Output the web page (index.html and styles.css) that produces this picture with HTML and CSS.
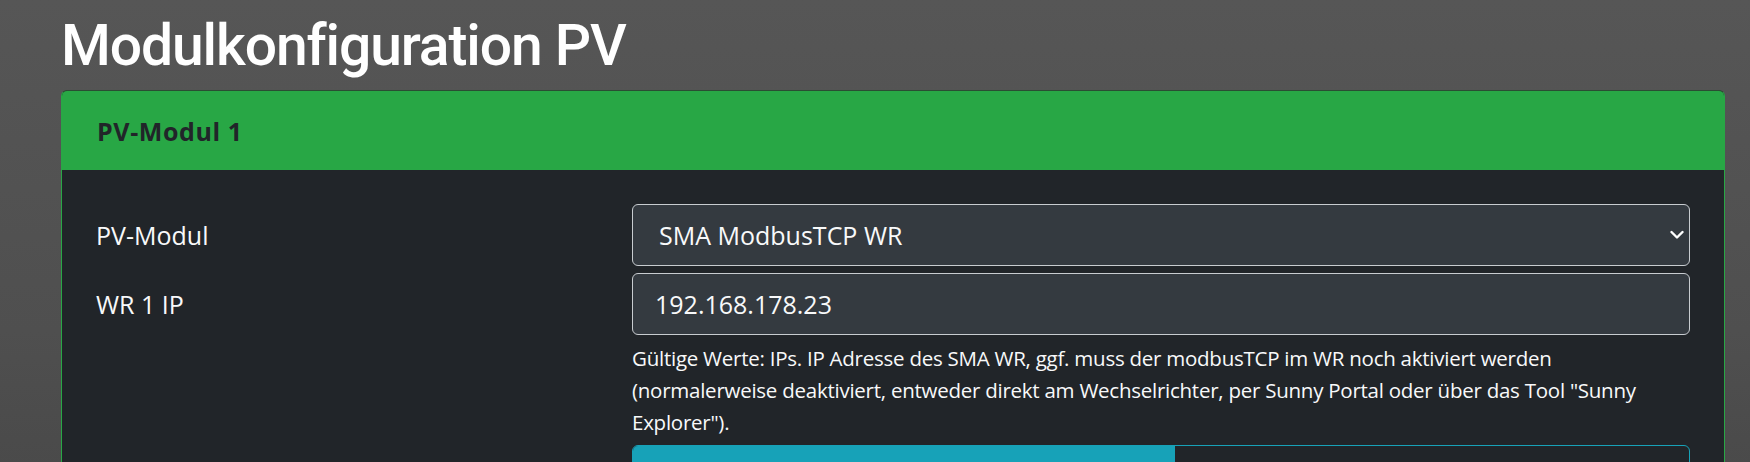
FILE: index.html
```html
<!DOCTYPE html>
<html lang="de">
<head>
<meta charset="utf-8">
<title>Modulkonfiguration PV</title>
<link rel="stylesheet" href="styles.css">
</head>
<body>
<main class="page">
  <h1 class="page-title">Modulkonfiguration PV</h1>
  <section class="card">
    <header class="card-header">PV-Modul 1</header>
    <div class="card-body">
      <div class="form-row">
        <label class="form-label" for="pvmodul">PV-Modul</label>
        <div class="select-wrap">
          <select id="pvmodul" class="form-control form-select">
            <option>SMA ModbusTCP WR</option>
          </select>
          <svg class="select-arrow" width="14" height="10" viewBox="0 0 14 10" aria-hidden="true">
            <polyline points="1.5,2 7,7.5 12.5,2" fill="none" stroke="#fff" stroke-width="2.4" stroke-linecap="round" stroke-linejoin="round"/>
          </svg>
        </div>
      </div>
      <div class="form-row">
        <label class="form-label" for="wr1ip">WR 1 IP</label>
        <div class="field">
          <input id="wr1ip" class="form-control" type="text" value="192.168.178.23">
          <small class="form-text">Gültige Werte: IPs. IP Adresse des SMA WR, ggf. muss der modbusTCP im WR noch aktiviert werden (normalerweise deaktiviert, entweder direkt am Wechselrichter, per Sunny Portal oder über das Tool "Sunny Explorer").</small>
        </div>
      </div>
      <div class="form-row">
        <span class="form-label"></span>
        <div class="btn-group">
          <button class="btn btn-active" type="button" aria-label="Nein"></button>
          <button class="btn" type="button" aria-label="Ja"></button>
        </div>
      </div>
    </div>
  </section>
</main>
</body>
</html>
```

FILE: styles.css
```css
html, body {
  margin: 0;
  padding: 0;
}

body {
  min-height: 100vh;
  background: linear-gradient(to bottom, #565656 0%, #4f4f4f 60%, #474747 100%);
  font-family: "Open Sans", "Noto Sans", sans-serif;
  color: #f8f9fa;
}

.page {
  padding: 12px 25px 0 61px;
}

.page-title {
  margin: 0 0 10px 0;
  font-family: Roboto, "Open Sans", sans-serif;
  font-size: 57px;
  font-weight: 500;
  line-height: 1.2;
  letter-spacing: -1.1px;
  color: #ffffff;
}

.card {
  border: 1px solid #28a745;
  border-top-color: #2a4d33;
  border-radius: 6px;
  background: #212529;
  overflow: hidden;
}

.card-header {
  height: 79px;
  display: flex;
  align-items: center;
  padding: 0 35px;
  background: #28a745;
  color: #212529;
  font-size: 25px;
  font-weight: 700;
  letter-spacing: 0.6px;
}

.card-body {
  padding: 34px 34px 40px 34px;
  display: flex;
  flex-direction: column;
  gap: 7px;
}

.form-row {
  display: grid;
  grid-template-columns: 536px 1fr;
  align-items: start;
}

.form-label {
  font-size: 25px;
  line-height: 62px;
  color: #f8f9fa;
}

.field {
  display: flex;
  flex-direction: column;
}

.form-control {
  box-sizing: border-box;
  width: 100%;
  height: 62px;
  margin: 0;
  padding: 0 22px;
  border: 1px solid #c8ccd0;
  border-radius: 6px;
  background: #343a40;
  color: #f8f9fa;
  font-family: inherit;
  font-size: 25px;
  outline: none;
}

.select-wrap {
  position: relative;
}

.form-select {
  appearance: none;
  -webkit-appearance: none;
  padding-left: 26px;
  padding-right: 50px;
}

.select-arrow {
  position: absolute;
  display: block;
  right: 6px;
  top: 26px;
  pointer-events: none;
}

.form-text {
  display: block;
  margin-top: 7px;
  font-size: 20.5px;
  line-height: 32px;
  letter-spacing: -0.25px;
  color: #f8f9fa;
}

.btn-group {
  display: grid;
  grid-template-columns: 542px 1fr;
  height: 62px;
  border: 1px solid #17a2b8;
  border-radius: 6px;
  overflow: hidden;
}

.btn {
  margin: 0;
  padding: 0;
  border: 0;
  background: transparent;
}

.btn-active {
  background: #17a2b8;
}
```
